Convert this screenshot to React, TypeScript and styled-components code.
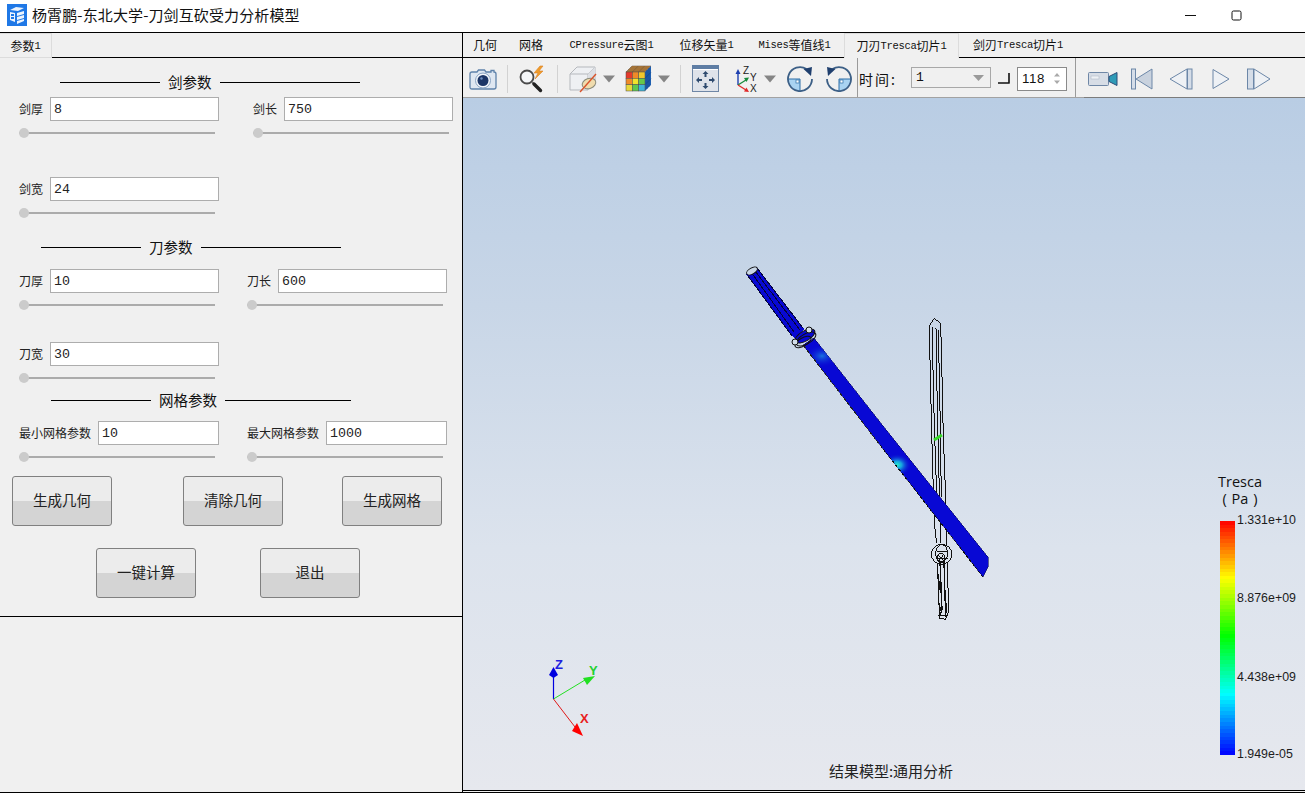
import React from "react";
import styled, { createGlobalStyle } from "styled-components";

const CJK = `"Noto Sans CJK SC", "Liberation Sans", sans-serif`;
const MONO = `"Liberation Mono", "Noto Sans CJK SC", monospace`;

const Global = createGlobalStyle`
  html, body { margin: 0; padding: 0; background: #f0f0f0; overflow: hidden; }
  * { box-sizing: border-box; }
  #root { width: 1305px; height: 793px; }
`;

const Window = styled.div`
  width: 1305px; height: 793px; display: flex; flex-direction: column;
  font-family: ${CJK}; color: #111; background: #f0f0f0;
  border-bottom: 1px solid #000;
`;

/* Title bar */
const TitleBar = styled.header`
  height: 33px; flex: none; background: #fff; border-bottom: 1px solid #000;
  display: flex; align-items: center; padding: 0 0 2px 7px;
`;
const TitleText = styled.span`
  font-size: 15px; margin-left: 5px; line-height: 20px; white-space: nowrap; letter-spacing: 0.12px;
`;
const WinControls = styled.div`
  margin-left: auto; display: flex; height: 100%;
`;
const WinButton = styled.div`
  width: 46px; display: flex; align-items: center; justify-content: center;
`;

/* Main split */
const Main = styled.div`
  flex: 1; display: flex; min-height: 0;
`;
const LeftPane = styled.aside`
  width: 463px; flex: none; display: flex; flex-direction: column;
  border-right: 1px solid #000;
`;
const RightPane = styled.section`
  flex: 1; min-width: 0; display: flex; flex-direction: column;
`;

/* Tabs */
const TabBar = styled.div`
  height: 25px; flex: none; display: flex; align-items: stretch;
  border-bottom: 1px solid #000; background: #f0f0f0;
`;
const LeftTabBar = styled(TabBar)`
  border-bottom: none;
`;
const TabRule = styled.div`
  flex: 1; border-bottom: 1px solid #000;
`;
const Tab = styled.div<{ $w: number; $active?: boolean }>`
  width: ${(p) => p.$w}px; flex: none; display: flex; align-items: center; justify-content: center;
  font-size: 12px; white-space: nowrap; line-height: 16px;
  ${(p) =>
    p.$active
      ? `border: 1px solid #dcdcdc; border-bottom: none; margin-bottom: -1px; position: relative; background: #f0f0f0;`
      : ``}
`;
const LeftTab = styled(Tab)`
  border: 1px solid #dcdcdc; border-left: none;
`;
const Lat = styled.span`
  font-family: "Liberation Mono", monospace; font-size: 10.5px; letter-spacing: -0.3px;
`;

/* Form */
const FormArea = styled.div`
  height: 559px; flex: none; border-bottom: 1px solid #000;
`;
const Empty = styled.div`flex: 1;`;
const Heading = styled.div<{ $left: number; $top: number; $right: number }>`
  display: flex; align-items: center; height: 20px; gap: 8px;
  margin: ${(p) => p.$top}px 0 0 ${(p) => p.$left}px;
  font-size: 14.5px;
  &::before { content: ""; width: 100px; height: 1px; background: #000; }
  &::after { content: ""; width: ${(p) => p.$right}px; height: 1px; background: #000; }
`;
const HeadingText = styled.span`
  position: relative; top: -1px;
`;
const FieldRow = styled.div<{ $top: number; $gap?: number }>`
  display: grid; grid-template-columns: 200px 200px; column-gap: ${(p) => p.$gap ?? 28}px;
  margin-top: ${(p) => p.$top}px; padding-left: 19px;
`;
const Field = styled.div`
  display: flex; flex-direction: column; gap: 7px; width: 200px;
`;
const FieldLine = styled.label`
  display: flex; align-items: center; gap: 7px; height: 24px;
`;
const FieldLabel = styled.span`
  font-size: 12px; white-space: nowrap; color: #222; padding-bottom: 2px;
`;
const ValueBox = styled.div`
  flex: 1; height: 24px; background: #fff; border: 1px solid #adadad;
  font-family: ${MONO}; font-size: 13.3px; line-height: 22px; padding: 1px 0 0 3px; color: #222;
`;
const Slider = styled.div`
  width: 196px; height: 11px; position: relative;
  &::before { content: ""; position: absolute; left: 0; right: 0; top: 4px; height: 2px; background: #ababab; }
  &::after { content: ""; position: absolute; left: 0; top: 0; width: 10px; height: 10px; border-radius: 50%; background: #cbcbcb; }
`;
const ButtonRow = styled.div<{ $top: number }>`
  display: flex; margin-top: ${(p) => p.$top}px;
`;
const ActionButton = styled.div<{ $ml: number }>`
  width: 100px; height: 50px; margin-left: ${(p) => p.$ml}px;
  border: 1px solid #808080; border-radius: 3px;
  background: linear-gradient(to bottom, #ececec 0, #ececec 50%, #d4d4d4 50%, #d4d4d4 100%);
  display: flex; align-items: center; justify-content: center;
  font-size: 14.5px; color: #222; padding-bottom: 3px;
`;

/* Toolbar */
const Toolbar = styled.div`
  height: 40px; flex: none; display: flex; align-items: center; background: #f0f0f0;
  border-bottom: 1px solid #a2a2a2; padding: 2px 0 0 6px; position: relative;
  &::after {
    content: ""; position: absolute; left: 621px; right: 0; bottom: -1px; height: 1px; background: #7c7c7c;
  }
`;
const Slot = styled.div<{ $ml: number; $w: number }>`
  margin-left: ${(p) => p.$ml}px; width: ${(p) => p.$w}px; flex: none; display: flex;
  align-items: center; justify-content: center;
  svg { display: block; }
`;
const Sep = styled.div<{ $ml: number; $dark?: boolean }>`
  margin-left: ${(p) => p.$ml}px; width: 1px; height: ${(p) => (p.$dark ? 39 : 28)}px; flex: none;
  background: ${(p) => (p.$dark ? "#9a9a9a" : "#d2d2d2")};
  ${(p) => (p.$dark ? "margin-top: -2px;" : "")}
`;
const TimeLabel = styled.span<{ $ml: number }>`
  margin-left: ${(p) => p.$ml}px; font-size: 14px; width: 40px; letter-spacing: 2px; flex: none; white-space: nowrap;
`;
const Combo = styled.div`
  margin-left: 12px; width: 80px; height: 21px; flex: none; border: 1px solid #a8a8a8; background: #f0f0f0;
  display: flex; align-items: center; justify-content: space-between; padding: 0 6px 0 4px;
  font-family: ${MONO}; font-size: 13px;
  margin-top: -2px;
`;
const Spin = styled.div`
  margin-left: 7px; width: 50px; height: 24px; flex: none; border: 1px solid #8a8a8a; background: #fff;
  display: flex; align-items: center; justify-content: space-between; padding: 0 5px 0 4px;
  font-family: "Liberation Sans", sans-serif; font-size: 13.3px; letter-spacing: 0.6px;
`;

/* Viewport */
const Viewport = styled.div`
  flex: 1; position: relative; overflow: hidden; border-bottom: 1px solid #000; margin-bottom: 1px;
  background: linear-gradient(to bottom, #b9cde4 0%, #c8d6e7 30%, #dce3ed 65%, #e6e8ee 100%);
`;
const Scene = styled.svg`
  position: absolute; left: 0; top: 0; width: 842px; height: 692px;
`;
const Legend = styled.div`
  position: absolute; left: 754px; top: 375px; width: 86px; height: 290px;
`;
const LegendTitle = styled.div`
  width: 46px; text-align: center; font-size: 14.5px; line-height: 17px; color: #111;
  font-family: "Open Sans", sans-serif; white-space: nowrap; word-spacing: 1px;
`;

const bands = (() => {
  const stops: [number, number[]][] = [
    [0, [255, 0, 0]], [0.245, [255, 255, 0]], [0.49, [0, 255, 0]], [0.74, [0, 255, 255]], [1, [0, 0, 255]],
  ];
  const n = 64;
  const out: string[] = [];
  for (let i = 0; i < n; i++) {
    const t = (i + 0.5) / n;
    let k = 0;
    while (k < stops.length - 2 && t > stops[k + 1][0]) k++;
    const [a, ca] = stops[k];
    const [b, cb] = stops[k + 1];
    const f = (t - a) / (b - a);
    const c = ca.map((v, j) => Math.round(v + (cb[j] - v) * f));
    out.push(`rgb(${c.join(",")}) ${(i / n) * 100}% ${((i + 1) / n) * 100}%`);
  }
  return out.join(",");
})();

const ColorBar = styled.div`
  position: absolute; left: 3px; top: 48px; width: 15px; height: 234px;
  background: linear-gradient(to bottom, ${bands});
`;
const Tick = styled.div<{ $top: number }>`
  position: absolute; left: 20px; top: ${(p) => p.$top}px; font-family: "Liberation Sans", sans-serif;
  font-size: 12.4px; line-height: 14px; color: #1c1c1c; white-space: nowrap;
`;
const Caption = styled.div`
  position: absolute; left: 0; right: 0; top: 664px; padding-left: 14px; text-align: center;
  font-size: 15px; line-height: 18px; color: #222;
`;

/* Icons */
const Arrow = () => (
  <svg width="12" height="8" viewBox="0 0 12 8"><path d="M0 0.5h12L6 7.5z" fill="#858585" /></svg>
);
const Camera = () => (
  <svg width="28" height="24" viewBox="0 0 28 24">
    <path d="M3 5h5l1.5-2h6L17 5h5V3.5h3V5q2 0 2 2v13q0 2-2 2H3q-2 0-2-2V7q0-2 2-2z" fill="#dfe7f1" stroke="#5f82aa" strokeWidth="1.3" />
    <circle cx="14" cy="13.5" r="7.5" fill="#f3f6fa" stroke="#8aa3c2" />
    <circle cx="14" cy="13.5" r="5.5" fill="#1c3566" />
    <circle cx="12.5" cy="11.5" r="1.2" fill="#6f8fbe" />
  </svg>
);
const Magnifier = () => (
  <svg width="30" height="28" viewBox="0 0 30 28">
    <circle cx="9" cy="12" r="6.5" fill="#f4f6f8" stroke="#4a4a4a" strokeWidth="1.8" />
    <path d="M14 17l2 2" stroke="#777" strokeWidth="2" />
    <path d="M16 19l6.5 6.5" stroke="#222" strokeWidth="3.4" strokeLinecap="round" />
    <path d="M22 1l-6 7h4l-3 6 8-8h-4l4-5z" fill="#ef9c2a" stroke="#d9822a" strokeWidth="0.6" />
  </svg>
);
const ClipCube = () => (
  <svg width="28" height="28" viewBox="0 0 28 28">
    <path d="M1 9l7-7h18v15l-7 8H1z" fill="#eef0f3" stroke="#b5b8bd" />
    <path d="M1 9h18v16M19 9l7-7" fill="none" stroke="#b5b8bd" />
    <path d="M19 9l7-7v15l-7 8z" fill="#dcdfe4" />
    <ellipse cx="20" cy="18.5" rx="7" ry="5" transform="rotate(-20 20 18.5)" fill="#f0dcae" stroke="#8b8b7a" />
    <path d="M11 27L27 9" stroke="#d8532b" strokeWidth="1.4" />
  </svg>
);
const colorRows = [
  ["#e53a2b", "#f08a28", "#f2c62c"],
  ["#f08a28", "#f2e22c", "#66c94a"],
  ["#e8d83a", "#5fc84f", "#3fb4d8"],
];
const ColorCube = () => (
  <svg width="27" height="27" viewBox="0 0 27 27">
    <path d="M1 7l6-6h19l-6 6z" fill="#b9803a" stroke="#5a4a3a" strokeWidth="0.5" />
    <path d="M3 5h19M5 3h19M7.3 7l6-6M13.6 7l6-6" stroke="#6a5236" strokeWidth="0.5" fill="none" />
    <path d="M20 7l6-6v19l-6 6z" fill="#1e5fb0" />
    <path d="M20 13.3l6-6M20 19.6l6-6M22 5v19M24 3v19" stroke="#123e7c" strokeWidth="0.5" />
    {colorRows.map((r, y) =>
      r.map((c, x) => (
        <rect key={`${x}${y}`} x={1 + x * 6.33} y={7 + y * 6.33} width="6.33" height="6.33" fill={c} stroke="#4a4a4a" strokeWidth="0.5" />
      ))
    )}
  </svg>
);
const FitView = () => (
  <svg width="27" height="27" viewBox="0 0 27 27">
    <rect x="0.5" y="0.5" width="26" height="26" fill="#dfe3ea" stroke="#6f87a6" />
    <rect x="0" y="0" width="27" height="4" fill="#5f7ea4" />
    <rect x="1" y="4" width="25" height="1" fill="#fff" />
    <path d="M13.5 6l-3 3h2v3h2V9h2zM13.5 24l-3-3h2v-3h2v3h2zM4 15l3-3v2h3v2H7v2zM23 15l-3-3v2h-3v2h3v2z" fill="#2e4a6e" />
  </svg>
);
const AxesIcon = () => (
  <svg width="26" height="28" viewBox="0 0 26 28">
    <path d="M4 20V8" stroke="#1d3fb0" strokeWidth="1.4" />
    <path d="M4 4l-2.5 5h5z" fill="#1d3fb0" />
    <path d="M4 20l8-5" stroke="#178a3c" strokeWidth="1.4" />
    <path d="M15 12.5l-5 .5 2.5 4z" fill="#178a3c" />
    <path d="M4 20l8 5" stroke="#e02a2a" strokeWidth="1.4" />
    <path d="M15 27l-5-.5 2.5-4z" fill="#e02a2a" />
    <text x="9" y="9" fontSize="10" fontFamily="Liberation Sans" fill="#222">Z</text>
    <text x="16" y="16" fontSize="10" fontFamily="Liberation Sans" fill="#222">Y</text>
    <text x="16" y="27" fontSize="10" fontFamily="Liberation Sans" fill="#222">X</text>
  </svg>
);
const RotateSvg = styled.svg<{ $flip?: boolean }>`
  transform: ${(p) => (p.$flip ? "scaleX(-1)" : "none")};
`;
const Rotate = ({ flip }: { flip?: boolean }) => (
  <RotateSvg $flip={flip} width="26" height="26" viewBox="0 0 26 26">
    <path d="M13 13V25A12 12 0 0 1 1 13z" fill="#a9d3f1" />
    <path d="M1 13h12v12" fill="none" stroke="#2d6fa8" strokeWidth="1" />
    <rect x="9" y="14" width="3" height="3" fill="#fff" stroke="#2d6fa8" strokeWidth="0.7" />
    <path d="M19.5 3A12 12 0 1 0 25 13" fill="none" stroke="#3c5f86" strokeWidth="1.8" />
    <path d="M16.5 3L25 1l-1 9z" fill="#1f3f6e" />
  </RotateSvg>
);
const Video = () => (
  <svg width="30" height="18" viewBox="0 0 30 18">
    <rect x="0.5" y="2.5" width="20" height="13" rx="1" fill="#d7dde6" stroke="#6f87a6" />
    <rect x="3" y="6" width="8" height="3" fill="#eef1f5" stroke="#a6b2c2" strokeWidth="0.5" />
    <path d="M21 6.5L29 2.5v13L21 11.5z" fill="#2f9bb7" stroke="#2c4d78" />
  </svg>
);
const stroke = "#6c87a8";
const First = () => (
  <svg width="22" height="22" viewBox="0 0 22 22">
    <rect x="0.5" y="1" width="4" height="20" fill="#d5dde8" stroke={stroke} />
    <path d="M21 1v20L5 11z" fill="#c9d2de" stroke={stroke} />
  </svg>
);
const Prev = () => (
  <svg width="24" height="22" viewBox="0 0 24 22">
    <path d="M18 1v20L1 11z" fill="#eef1f5" stroke={stroke} />
    <rect x="18.5" y="1" width="4.5" height="20" fill="#d5dde8" stroke={stroke} />
  </svg>
);
const Next = () => (
  <svg width="18" height="22" viewBox="0 0 18 22">
    <path d="M1 1.5v19L17 11z" fill="#eef1f5" stroke={stroke} />
  </svg>
);
const Last = () => (
  <svg width="24" height="22" viewBox="0 0 24 22">
    <rect x="0.5" y="1" width="6" height="20" fill="#d5dde8" stroke={stroke} />
    <path d="M7 1v20L23 11z" fill="#eef1f5" stroke={stroke} />
  </svg>
);

const AppLogo = () => (
  <svg width="20" height="22" viewBox="0 0 20 22">
    <rect width="20" height="22" fill="#1f78e6" />
    <path d="M3 6l6-3 8 1-6 3zM3 8l5 1v9l-5-2zM10 9l7-2v3l-7 2zM10 13l7-2v3l-7 2zM10 17l7-2v2l-7 3z" fill="#fff" opacity="0.92" />
    <path d="M4 10h3v2H4zM4 13h3v2H4z" fill="#1f78e6" />
  </svg>
);

/* Scene: coordinates in page pixels through viewBox */
const Sword = () => (
  <g transform="translate(880 310) scale(0.3333)" fill="none" stroke="#111" strokeWidth="3" shapeRendering="crispEdges">
    <path d="M163 25L150 45L148 60L152 240L157 440L163 640L170 700" />
    <path d="M163 25L182 40L186 200L190 380L197 560L200 705" />
    <path d="M157 50L160 240L166 440L172 600M168 55L172 300L178 540L183 700M175 60L180 300L184 560" />
    <ellipse cx="185" cy="733" rx="31" ry="30" />
    <ellipse cx="185" cy="730" rx="18" ry="26" />
    <ellipse cx="183" cy="745" rx="12" ry="14" />
    <path d="M170 725h32M168 745h36M175 735L195 755M190 735L175 755" />
    <path d="M172 760L178 900L177 925L197 928L206 905L202 760" />
    <path d="M180 755L186 900M192 755L197 920M176 880L184 905L178 915L200 918M172 780L182 850M200 880L197 915" strokeWidth="4" />
  </g>
);

const Blade = () => (
  <g>
    <defs>
      <radialGradient id="hot1" cx="0.5" cy="0.5" r="0.5">
        <stop offset="0" stopColor="#27f0c8" />
        <stop offset="0.35" stopColor="#15a0e0" />
        <stop offset="1" stopColor="#0a14d0" stopOpacity="0" />
      </radialGradient>
      <radialGradient id="hot2" cx="0.5" cy="0.5" r="0.5">
        <stop offset="0" stopColor="#1a72e0" />
        <stop offset="1" stopColor="#0a14d0" stopOpacity="0" />
      </radialGradient>
      <clipPath id="bladeClip">
        <path d="M814 338L880 422L988 557L988 567L983 577L880 445L803 345z" />
      </clipPath>
    </defs>
    <path d="M814 338L880 422L988 557L988 567L983 577L880 445L803 345z" fill="#0808d4" shapeRendering="crispEdges" stroke="#08085a" strokeWidth="0.6" />
    <g clipPath="url(#bladeClip)">
      <ellipse cx="897" cy="465" rx="14" ry="11" fill="url(#hot1)" />
      <ellipse cx="822" cy="356" rx="16" ry="11" fill="url(#hot2)" />
    </g>
    <path d="M880 445L983 577" stroke="#111" strokeWidth="1" strokeDasharray="3 2" fill="none" shapeRendering="crispEdges" />
    <path d="M803 345L880 445" stroke="#222" strokeWidth="1" strokeDasharray="4 2" fill="none" shapeRendering="crispEdges" />
    {/* handle */}
    <path d="M746 274L757 267L804 329L795 339z" fill="#0808d4" shapeRendering="crispEdges" />
    <path d="M751 272L794 332M755 271L800 330M748 276L792 336M757 268L803 328" stroke="#05053c" strokeWidth="1" fill="none" shapeRendering="crispEdges" />
    <ellipse cx="752" cy="271" rx="6" ry="3" fill="#c8d6e6" stroke="#111" transform="rotate(-30 752 271)" />
    {/* guard */}
    <g fill="none" stroke="#111" strokeWidth="1">
      <ellipse cx="805" cy="336" rx="11" ry="5" transform="rotate(-30 805 336)" fill="#0808d4" />
      <ellipse cx="806" cy="339" rx="11" ry="5" transform="rotate(-30 806 339)" />
      <ellipse cx="803" cy="342" rx="9" ry="4" transform="rotate(-30 803 342)" />
      <circle cx="809" cy="330" r="3" fill="#d3deea" />
      <circle cx="795" cy="342" r="3" fill="#d3deea" />
    </g>
    <path d="M934 440L942 435" stroke="#35d826" strokeWidth="3" />
  </g>
);

const Triad = () => (
  <g fontFamily="Liberation Sans" fontWeight="700" fontSize="13">
    <path d="M553.5 699V676" stroke="#0000e0" strokeWidth="1.2" />
    <path d="M553.5 667l4.5 8-4.5 3-4.5-3z" fill="#0000e0" />
    <path d="M553.5 699L585 680" stroke="#22e022" strokeWidth="1" />
    <path d="M595 676L583 678L587 685z" fill="#22e022" />
    <path d="M553.5 699L575 727" stroke="#e01818" strokeWidth="1" />
    <path d="M583 736L572 731L577 723z" fill="#f00" />
    <text x="555" y="669" fill="#2020e0">Z</text>
    <text x="589" y="675" fill="#22d030">Y</text>
    <text x="580" y="723" fill="#e82020">X</text>
  </g>
);

const F = ({ label, value }: { label: string; value: string }) => (
  <Field>
    <FieldLine>
      <FieldLabel>{label}</FieldLabel>
      <ValueBox>{value}</ValueBox>
    </FieldLine>
    <Slider />
  </Field>
);

export default function App() {
  return (
    <>
      <Global />
      <Window>
        <TitleBar>
          <AppLogo />
          <TitleText>杨霄鹏-东北大学-刀剑互砍受力分析模型</TitleText>
          <WinControls>
            <WinButton>
              <svg width="11" height="11" viewBox="0 0 11 11"><path d="M0 5.5h11" stroke="#111" /></svg>
            </WinButton>
            <WinButton>
              <svg width="11" height="11" viewBox="0 0 11 11"><rect x="1" y="1" width="9" height="9" rx="1.5" fill="none" stroke="#111" /></svg>
            </WinButton>
            <WinButton />
          </WinControls>
        </TitleBar>
        <Main>
          <LeftPane>
            <LeftTabBar>
              <LeftTab $w={52}>参数<Lat>1</Lat></LeftTab>
              <TabRule />
            </LeftTabBar>
            <FormArea>
              <Heading $left={60} $top={14} $right={140}><HeadingText>剑参数</HeadingText></Heading>
              <FieldRow $top={5} $gap={34}>
                <F label="剑厚" value="8" />
                <F label="剑长" value="750" />
              </FieldRow>
              <FieldRow $top={38}>
                <F label="剑宽" value="24" />
              </FieldRow>
              <Heading $left={41} $top={18} $right={140}><HeadingText>刀参数</HeadingText></Heading>
              <FieldRow $top={12}>
                <F label="刀厚" value="10" />
                <F label="刀长" value="600" />
              </FieldRow>
              <FieldRow $top={31}>
                <F label="刀宽" value="30" />
              </FieldRow>
              <Heading $left={51} $top={6} $right={126}><HeadingText>网格参数</HeadingText></Heading>
              <FieldRow $top={11}>
                <F label="最小网格参数" value="10" />
                <F label="最大网格参数" value="1000" />
              </FieldRow>
              <ButtonRow $top={13}>
                <ActionButton $ml={12}>生成几何</ActionButton>
                <ActionButton $ml={71}>清除几何</ActionButton>
                <ActionButton $ml={59}>生成网格</ActionButton>
              </ButtonRow>
              <ButtonRow $top={22}>
                <ActionButton $ml={96}>一键计算</ActionButton>
                <ActionButton $ml={64}>退出</ActionButton>
              </ButtonRow>
            </FormArea>
            <Empty />
          </LeftPane>
          <RightPane>
            <TabBar>
              <Tab $w={44}>几何</Tab>
              <Tab $w={48}>网格</Tab>
              <Tab $w={113}><Lat>CPressure</Lat>云图<Lat>1</Lat></Tab>
              <Tab $w={77}>位移矢量<Lat>1</Lat></Tab>
              <Tab $w={99}><Lat>Mises</Lat>等值线<Lat>1</Lat></Tab>
              <Tab $w={115} $active>刀刃<Lat>Tresca</Lat>切片<Lat>1</Lat></Tab>
              <Tab $w={118}>剑刃<Lat>Tresca</Lat>切片<Lat>1</Lat></Tab>
            </TabBar>
            <Toolbar>
              <Slot $ml={0} $w={28}><Camera /></Slot>
              <Sep $ml={10} />
              <Slot $ml={10} $w={30}><Magnifier /></Slot>
              <Sep $ml={9} />
              <Slot $ml={11} $w={28}><ClipCube /></Slot>
              <Slot $ml={6} $w={12}><Arrow /></Slot>
              <Slot $ml={10} $w={27}><ColorCube /></Slot>
              <Slot $ml={6} $w={12}><Arrow /></Slot>
              <Sep $ml={10} />
              <Slot $ml={11} $w={27}><FitView /></Slot>
              <Slot $ml={15} $w={26}><AxesIcon /></Slot>
              <Slot $ml={4} $w={12}><Arrow /></Slot>
              <Slot $ml={11} $w={26}><Rotate /></Slot>
              <Slot $ml={13} $w={26}><Rotate flip /></Slot>
              <Sep $ml={5} $dark />
              <TimeLabel $ml={1}>时间:</TimeLabel>
              <Combo>
                <span>1</span>
                <svg width="11" height="6" viewBox="0 0 11 6"><path d="M0 0h11L5.5 6z" fill="#9a9a9a" /></svg>
              </Combo>
              <Slot $ml={7} $w={12}>
                <svg width="12" height="11" viewBox="0 0 12 11"><path d="M0 10h11.5M11 0v10.5" stroke="#111" strokeWidth="1.6" fill="none" /></svg>
              </Slot>
              <Spin>
                <span>118</span>
                <svg width="8" height="13" viewBox="0 0 8 13"><path d="M4 1l3 3.5H1zM4 12l3-3.5H1z" fill="#aaa" /></svg>
              </Spin>
              <Sep $ml={8} $dark />
              <Slot $ml={12} $w={30}><Video /></Slot>
              <Slot $ml={13} $w={22}><First /></Slot>
              <Slot $ml={16} $w={24}><Prev /></Slot>
              <Slot $ml={19} $w={18}><Next /></Slot>
              <Slot $ml={17} $w={24}><Last /></Slot>
            </Toolbar>
            <Viewport>
              <Scene viewBox="463 98 842 692">
                <Sword />
                <Blade />
                <Triad />
              </Scene>
              <Legend>
                <LegendTitle>
                  Tresca
                  <br />( Pa )
                </LegendTitle>
                <ColorBar />
                <Tick $top={40}>1.331e+10</Tick>
                <Tick $top={118}>8.876e+09</Tick>
                <Tick $top={197}>4.438e+09</Tick>
                <Tick $top={274}>1.949e-05</Tick>
              </Legend>
              <Caption>结果模型:通用分析</Caption>
            </Viewport>
          </RightPane>
        </Main>
      </Window>
    </>
  );
}
